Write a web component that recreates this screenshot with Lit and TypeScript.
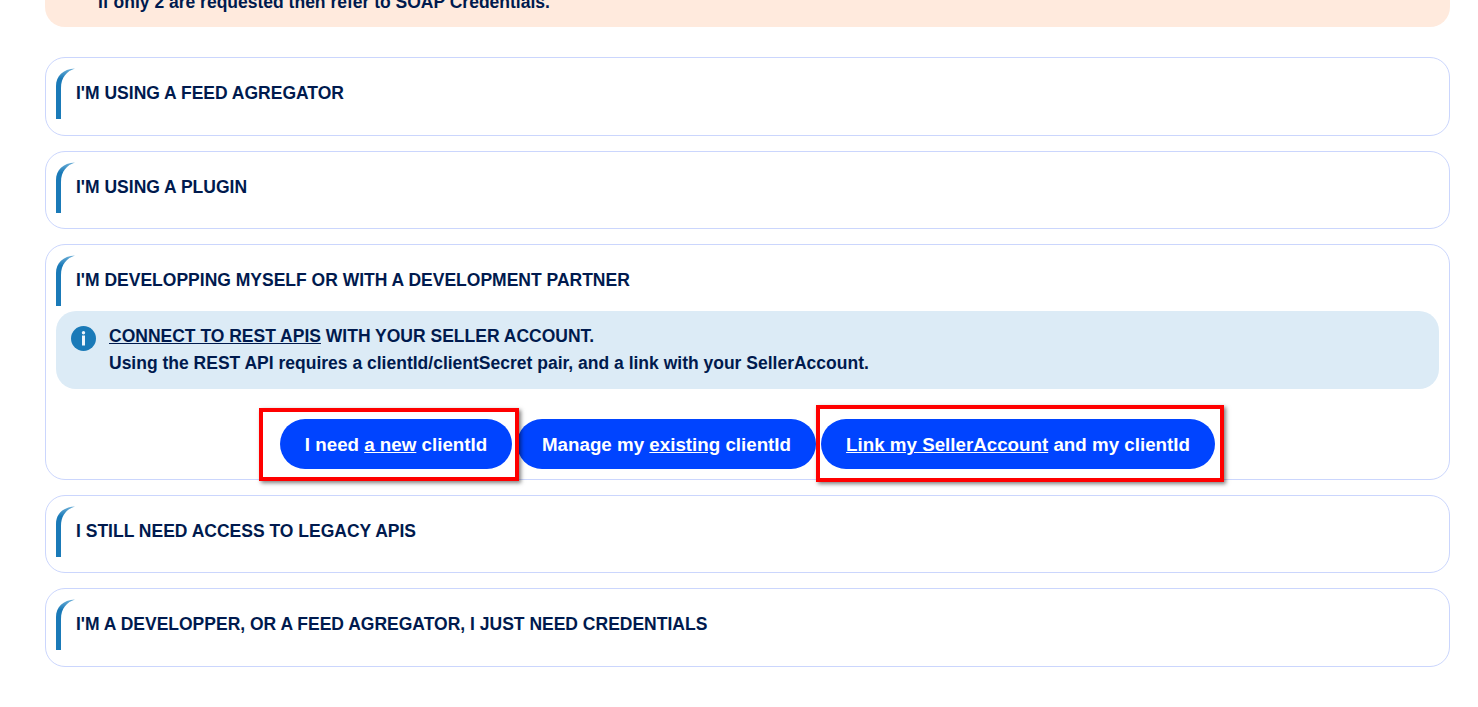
import { LitElement, html, css } from "lit";
import { customElement } from "lit/decorators.js";

@customElement("app-root")
export class AppRoot extends LitElement {
  static styles = css`
    :host {
      display: block;
      height: 707px;
      overflow: hidden;
      background: #fff;
      font-family: "Liberation Sans", Arial, sans-serif;
      font-size: 17.5px;
      font-weight: 700;
      color: #001a4e;
    }
    .page {
      padding: 0 28px 0 45px;
      display: flex;
      flex-direction: column;
      gap: 15px;
    }
    .banner {
      margin-top: -22px;
      margin-bottom: 15px;
      height: 49px;
      box-sizing: border-box;
      padding: 14px 53px 0;
      line-height: 20px;
      background: #ffeadd;
      border-radius: 0 0 20px 20px;
    }
    .card {
      border: 1px solid #cbd6fd;
      border-radius: 20px;
      padding: 10px 10px 15.6px;
      background: #fff;
    }
    .head {
      position: relative;
      height: 51px;
      display: flex;
      align-items: center;
      padding: 0 0 0 20px;
      box-sizing: border-box;
      text-transform: uppercase;
    }
    .accent {
      position: absolute;
      left: 0;
      top: 0;
      width: 20px;
      height: 51px;
      box-sizing: border-box;
    }
    .info {
      margin-top: 5px;
      background: #dcebf6;
      border-radius: 20px;
      padding: 12px 15px;
      display: flex;
      gap: 13px;
      line-height: 27px;
      height: 78px;
      box-sizing: border-box;
    }
    .info svg {
      flex: none;
      margin-top: 3px;
    }
    .actions {
      position: relative;
      display: flex;
      justify-content: center;
      gap: 5px;
      margin: 30px 0 -6px;
      height: 50px;
    }
    .btn {
      height: 50px;
      box-sizing: border-box;
      padding-top: 1px;
      display: flex;
      align-items: center;
      justify-content: center;
      white-space: pre;
      border-radius: 25px;
      background: #0044ff;
      color: #fff;
      font-size: 18.75px;
    }
    .b1 { width: 232px; }
    .b2 { width: 299px; }
    .b3 { width: 394px; }
    .mark {
      position: absolute;
      box-sizing: border-box;
      border: 4px solid #ff0000;
      box-shadow: 2px 2px 4px rgba(0, 0, 0, 0.5);
      pointer-events: none;
    }
    .m1 { left: 203px; top: -11px; width: 260px; height: 73px; }
    .m2 { left: 760px; top: -14px; width: 408px; height: 77px; }
  `;

  private accent() {
    return html`<svg class="accent" viewBox="0 0 20 51" aria-hidden="true">
      <defs>
        <linearGradient id="g" x1="0" y1="0" x2="0" y2="1">
          <stop offset="0" stop-color="#6fb0d8"></stop>
          <stop offset="0.2" stop-color="#1a7ab8"></stop>
          <stop offset="1" stop-color="#1a7ab8"></stop>
        </linearGradient>
      </defs>
      <path d="M0 51V18C0 8 7 1 19 0.4C11 3 5 9 5 20V51Z" fill="url(#g)"></path>
    </svg>`;
  }

  private card(title: string, body: unknown = null) {
    return html`<section class="card">
      <div class="head">${this.accent()}<span>${title}</span></div>
      ${body}
    </section>`;
  }

  render() {
    const body = html`
      <div class="info">
        <svg width="25" height="25" viewBox="0 0 25 25" aria-hidden="true">
          <circle cx="12.5" cy="12.5" r="12.5" fill="#1a7ab8"></circle>
          <circle cx="12.5" cy="6.8" r="1.7" fill="#eef5fb"></circle>
          <rect x="11" y="9.5" width="3" height="10" fill="#eef5fb"></rect>
        </svg>
        <div>
          <div><u>CONNECT TO REST APIS</u> WITH YOUR SELLER ACCOUNT.</div>
          <div>Using the REST API requires a clientId/clientSecret pair, and a link with your SellerAccount.</div>
        </div>
      </div>
      <div class="actions">
        <div class="btn b1"><span>I need <u>a new</u> clientId</span></div>
        <div class="btn b2"><span>Manage my <u>existing</u> clientId</span></div>
        <div class="btn b3"><span><u>Link my SellerAccount</u> and my clientId</span></div>
        <div class="mark m1"></div>
        <div class="mark m2"></div>
      </div>
    `;
    return html`<div class="page">
      <div class="banner">If only 2 are requested then refer to SOAP Credentials.</div>
      ${this.card("I'm using a feed agregator")}
      ${this.card("I'm using a plugin")}
      ${this.card("I'm developping myself or with a development partner", body)}
      ${this.card("I still need access to legacy APIs")}
      ${this.card("I'm a developper, or a feed agregator, I just need credentials")}
    </div>`;
  }
}
